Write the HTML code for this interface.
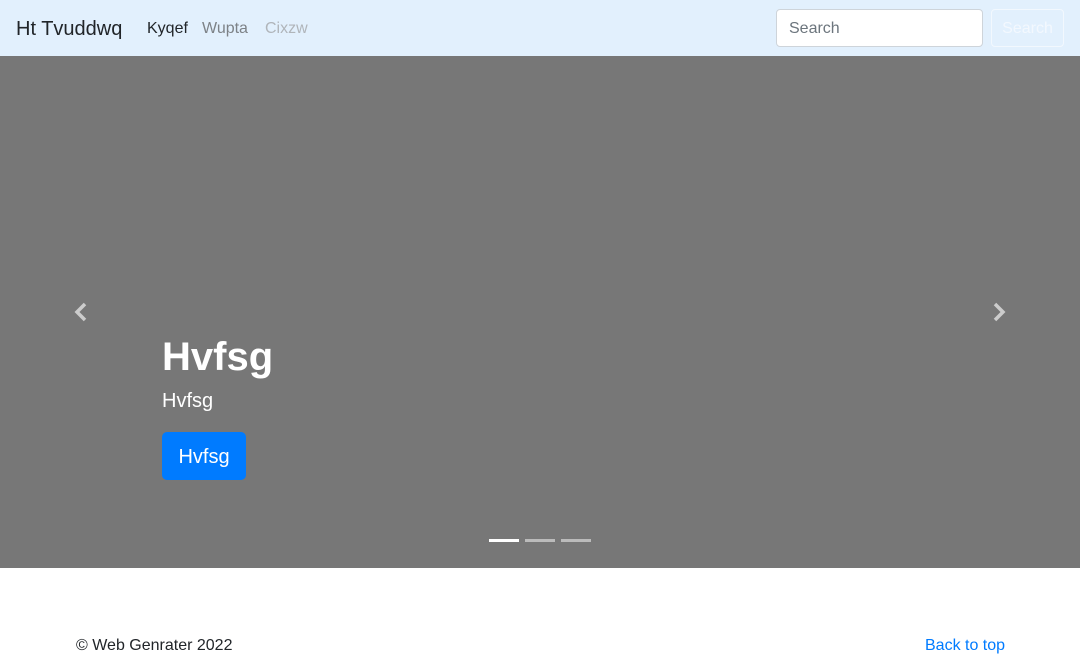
<!DOCTYPE html>
<html><head><style>
*{box-sizing:border-box;margin:0;padding:0}
body{width:1080px;height:656px;overflow:hidden;font-family:"Liberation Sans",sans-serif;background:#fff;position:relative}
nav{position:absolute;top:0;left:0;width:1080px;height:56px;background:#e2f0fd}
.brand{position:absolute;left:16px;top:18px;font-size:20px;color:#212529}
.l{position:absolute;top:20px;font-size:16px}
.inp{position:absolute;left:776px;top:9px;width:207px;height:38px;border:1px solid #ced4da;border-radius:4px;background:#fff;font-size:16px;color:#6c757d;padding:10px 12px}
.btn{position:absolute;left:991px;top:9px;width:73px;height:38px;border:1px solid #f2f8fe;border-radius:4px;color:#f3f8fe;font-size:16px;text-align:center;line-height:38px}
.car{position:absolute;top:56px;left:0;width:1080px;height:512px;background:#777}
h1{position:absolute;left:162px;top:335px;font-size:40px;color:#fff;font-weight:bold}
.sub{position:absolute;left:162px;top:390px;font-size:20px;color:#fff}
.cb{position:absolute;left:162px;top:432px;width:84px;height:48px;background:#007bff;border-radius:5px;color:#fff;font-size:20px;text-align:center;line-height:50px}
.ind{position:absolute;top:539px;height:3px;width:30px;background:#fff}
footer{position:absolute;top:637px;font-size:16px}
</style></head><body>
<nav><div class="brand">Ht Tvuddwq</div>
<div class="l" style="left:147px;color:#212529">Kyqef</div>
<div class="l" style="left:202px;color:#7d8287">Wupta</div>
<div class="l" style="left:265px;color:#b0b5ba">Cixzw</div>
<div class="inp">Search</div><div class="btn">Search</div></nav>
<div class="car"></div>
<svg style="position:absolute;left:72px;top:302px" width="18" height="20"><path d="M13 2 L5 10 L13 18" stroke="#ccc" stroke-width="3.5" fill="none"/></svg>
<svg style="position:absolute;left:990px;top:302px" width="18" height="20"><path d="M5 2 L13 10 L5 18" stroke="#ccc" stroke-width="3.5" fill="none"/></svg>
<h1>Hvfsg</h1><div class="sub">Hvfsg</div><div class="cb">Hvfsg</div>
<div class="ind" style="left:489px"></div><div class="ind" style="left:525px;opacity:.5"></div><div class="ind" style="left:561px;opacity:.5"></div>
<footer style="left:76px;color:#212529">© Web Genrater 2022</footer>
<footer style="left:925px;color:#007bff">Back to top</footer>
</body></html>
